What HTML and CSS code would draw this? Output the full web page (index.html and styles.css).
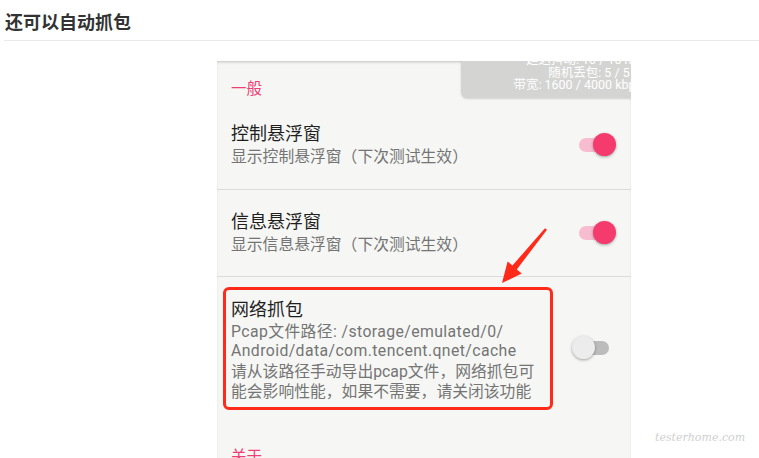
FILE: index.html
```html
<!DOCTYPE html>
<html lang="zh">
<head>
<meta charset="utf-8">
<title>还可以自动抓包</title>
<link rel="stylesheet" href="styles.css">
</head>
<body>
<div class="page">
  <header class="post-head">
    <h2 class="post-title">还可以自动抓包</h2>
  </header>

  <div class="phone">
    <div class="stats">
      <div>延迟抖动: 10 / 10 ms</div>
      <div>随机丢包: 5 / 5 %</div>
      <div>带宽: 1600 / 4000 kbps</div>
    </div>

    <div class="category">一般</div>

    <div class="pref pref-first">
      <div class="pref-text">
        <div class="pref-title">控制悬浮窗</div>
        <div class="pref-sub">显示控制悬浮窗（下次测试生效）</div>
      </div>
      <div class="switch on"><span class="track"></span><span class="thumb"></span></div>
    </div>

    <div class="pref pref-second">
      <div class="pref-text">
        <div class="pref-title">信息悬浮窗</div>
        <div class="pref-sub">显示信息悬浮窗（下次测试生效）</div>
      </div>
      <div class="switch on"><span class="track"></span><span class="thumb"></span></div>
    </div>

    <div class="pref pref-last">
      <div class="pref-text highlight">
        <div class="pref-title">网络抓包</div>
        <div class="pref-sub long"><span class="path">Pcap文件路径: /storage/emulated/0/<br>Android/data/com.tencent.qnet/cache</span><br>请从该路径手动导出pcap文件<span class="punct">，</span>网络抓包可<br>能会影响性能<span class="punct">，</span>如果不需要<span class="punct">，</span>请关闭该功能</div>
      </div>
      <div class="switch off"><span class="track"></span><span class="thumb"></span></div>
    </div>

    <div class="category category-about">关于</div>
  </div>

  <svg class="arrow" width="759" height="458" viewBox="0 0 759 458" aria-hidden="true">
    <polygon fill="#ff2a1a" points="502,283 507.6,261.4 512.4,265.6 545,228.2 547,229.8 516.8,269.4 521.8,273.6"/>
  </svg>

  <div class="watermark">testerhome.com</div>
</div>
</body>
</html>
```

FILE: styles.css
```css
* { box-sizing: border-box; }

html, body {
  margin: 0;
  padding: 0;
  background: #ffffff;
}

body {
  font-family: "Noto Sans CJK SC", "Noto Sans", "Liberation Sans", sans-serif;
  width: 759px;
  height: 458px;
  overflow: hidden;
}

.page {
  position: relative;
  width: 759px;
  height: 458px;
}

.post-head {
  margin-left: 4px;
  height: 41px;
  border-bottom: 1px solid #e9e9e9;
  padding: 9px 0 0 1px;
}

.post-title {
  margin: 0;
  font-size: 18px;
  line-height: 24px;
  font-weight: 700;
  color: #333333;
}

.phone {
  position: relative;
  margin: 20px 0 0 217px;
  width: 414px;
  height: 397px;
  overflow: hidden;
  background: #f6f7f5;
  box-shadow: inset 0 2px 3px -1px rgba(0, 0, 0, 0.22);
  font-family: "Roboto", "Noto Sans CJK SC", sans-serif;
}

.stats {
  position: absolute;
  left: 244px;
  top: -14px;
  width: 185px;
  height: 51px;
  padding: 7px 4px 6px 0;
  background: #d4d5d3;
  border-bottom-left-radius: 6px;
  box-shadow: 0 1px 2px rgba(0, 0, 0, 0.15);
  color: #ffffff;
  font-size: 12.5px;
  line-height: 12.5px;
  text-align: right;
  white-space: nowrap;
  font-family: "Roboto", "Noto Sans CJK SC", sans-serif;
}

.category {
  padding: 18px 14px 12px;
  font-size: 15.5px;
  line-height: 20px;
  color: #ef3d77;
}

.category-about {
  padding-top: 27px;
}

.pref {
  display: flex;
  align-items: center;
  justify-content: space-between;
}

.pref-first {
  padding: 11px 15px 21px 14px;
  border-bottom: 1px solid #dcdcdc;
}

.pref-second {
  padding: 20px 15px 20px 14px;
  border-bottom: 1px solid #dcdcdc;
}

.pref-last {
  padding: 10px 19px 10px 6px;
}

.pref-title {
  font-size: 18px;
  line-height: 24px;
  color: #1f1f1f;
}

.pref-sub {
  font-size: 15.8px;
  line-height: 22px;
  color: #747474;
  white-space: nowrap;
}

.pref-sub.long {
  font-size: 15.8px;
  line-height: 19.4px;
}

.path {
  letter-spacing: 0.4px;
}

.punct {
  font-family: "Noto Sans CJK TC", sans-serif;
}

.highlight {
  width: 330px;
  border: 3px solid #ff2a1a;
  border-radius: 6px;
  padding: 8px 0 5px 5px;
}

.switch {
  position: relative;
  width: 40px;
  height: 24px;
  flex: none;
}

.track {
  position: absolute;
  left: 3px;
  top: 5px;
  width: 34px;
  height: 14px;
  border-radius: 7px;
}

.thumb {
  position: absolute;
  top: 0;
  width: 23px;
  height: 23px;
  border-radius: 50%;
  box-shadow: 0 1px 3px rgba(0, 0, 0, 0.35);
}

.switch.on .track { background: #f8bcd0; }
.switch.on .thumb { right: 0; background: #f53a6e; }

.switch.off .track { background: #bcbcbc; }
.switch.off .thumb { left: 0; background: #ececec; }

.arrow {
  position: absolute;
  left: 0;
  top: 0;
  pointer-events: none;
}

.watermark {
  position: absolute;
  left: 655px;
  top: 431px;
  font-family: "DejaVu Serif", serif;
  font-style: italic;
  font-weight: 300;
  font-size: 11px;
  color: #cfcfcf;
}
```
